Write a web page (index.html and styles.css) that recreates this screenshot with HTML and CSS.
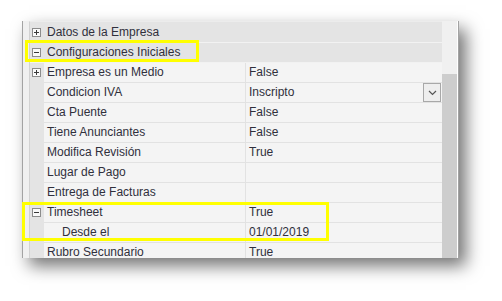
FILE: index.html
```html
<!DOCTYPE html>
<html lang="es">
<head>
<meta charset="utf-8">
<title>Propiedades</title>
<link rel="stylesheet" href="styles.css">
</head>
<body>
<div class="stage">
  <div class="frame">
    <div class="grid">
      <div class="row cat"><span class="gut"><i class="tog plus"></i></span><span class="label">Datos de la Empresa</span></div>
      <div class="row cat"><span class="gut"><i class="tog minus"></i></span><span class="label">Configuraciones Iniciales</span></div>
      <div class="row prop"><span class="gut"><i class="tog plus"></i></span><span class="name">Empresa es un Medio</span><span class="val">False</span></div>
      <div class="row prop"><span class="gut"></span><span class="name">Condicion IVA</span><span class="val">Inscripto<span class="drop"><svg width="9" height="6" viewBox="0 0 9 6"><path d="M1 1 L4.5 4.5 L8 1" fill="none" stroke="#555" stroke-width="1.2"/></svg></span></span></div>
      <div class="row prop"><span class="gut"></span><span class="name">Cta Puente</span><span class="val">False</span></div>
      <div class="row prop"><span class="gut"></span><span class="name">Tiene Anunciantes</span><span class="val">False</span></div>
      <div class="row prop"><span class="gut"></span><span class="name">Modifica Revisión</span><span class="val">True</span></div>
      <div class="row prop"><span class="gut"></span><span class="name">Lugar de Pago</span><span class="val"></span></div>
      <div class="row prop"><span class="gut"></span><span class="name">Entrega de Facturas</span><span class="val"></span></div>
      <div class="row prop"><span class="gut"><i class="tog minus"></i></span><span class="name">Timesheet</span><span class="val">True</span></div>
      <div class="row prop"><span class="gut"></span><span class="name sub">Desde el</span><span class="val">01/01/2019</span></div>
      <div class="row prop"><span class="gut"></span><span class="name">Rubro Secundario</span><span class="val">True</span></div>
    </div>
    <div class="scroll"><div class="thumb"></div></div>
  </div>
  <div class="hl hl-config"></div>
  <div class="hl hl-time"></div>
</div>
</body>
</html>
```

FILE: styles.css
```css
* { box-sizing: border-box; }
html, body { margin: 0; padding: 0; background: #ffffff; }
body {
  font-family: "Liberation Sans", Arial, sans-serif;
  font-size: 12px;
  color: #30303c;
}
.stage {
  position: relative;
  width: 502px;
  height: 301px;
  padding: 21px 0 0 22px;
}
.frame {
  display: flex;
  width: 437px;
  height: 237px;
  overflow: hidden;
  background: #f0f0f0;
  border-left: 1px solid #a3a3a3;
  border-right: 1px solid #a3a3a3;
  padding-left: 6px;
  box-shadow: 7px 8px 16px rgba(0, 0, 0, 0.55);
}
.grid {
  flex: none;
  width: 413px;
  border-left: 1px solid #d2d2d2;
  border-top: 1px solid #ececec;
  padding-top: 1px;
  background: #e4e4e4;
}
.row {
  display: flex;
  height: 20px;
  line-height: 19px;
}
.cat {
  background: #e4e4e4;
  border-bottom: 1px solid #f2f2f2;
}
.gut {
  flex: none;
  width: 14px;
  height: 19px;
  display: flex;
  align-items: center;
  padding-left: 2px;
  background: #e4e4e4;
}
.label { padding-left: 3px; }
.name {
  flex: none;
  width: 202px;
  padding-left: 3px;
  background: #f4f4f4;
  border-right: 1px solid #e2e2e2;
  border-bottom: 1px solid #e2e2e2;
}
.name.sub { padding-left: 18px; }
.val {
  flex: 1;
  position: relative;
  padding-left: 3px;
  background: #f4f4f4;
  border-bottom: 1px solid #e2e2e2;
}
.drop {
  position: absolute;
  right: 1px;
  top: 0;
  width: 18px;
  height: 19px;
  border: 1px solid #a8a8a8;
  background: #eeeeee;
  display: flex;
  align-items: center;
  justify-content: center;
}
.tog {
  position: relative;
  display: block;
  width: 9px;
  height: 9px;
  border: 1px solid #8c8c8c;
  background: #fafafa;
}
.tog::before {
  content: "";
  position: absolute;
  left: 1px;
  top: 3px;
  width: 5px;
  height: 1px;
  background: #3a3a3a;
}
.tog.plus::after {
  content: "";
  position: absolute;
  left: 3px;
  top: 1px;
  width: 1px;
  height: 5px;
  background: #3a3a3a;
}
.scroll {
  flex: none;
  width: 15px;
  background: #f0f0f0;
  border-right: 1px solid #ffffff;
  width: 16px;
  padding-top: 53px;
}
.thumb {
  width: 15px;
  height: 200px;
  background: #cdcdcd;
}
.hl {
  position: absolute;
  border: 3px solid #ffff00;
}
.hl-config {
  left: 25px;
  top: 40px;
  width: 174px;
  height: 22px;
}
.hl-time {
  left: 22px;
  top: 202px;
  width: 307px;
  height: 39px;
}
```
